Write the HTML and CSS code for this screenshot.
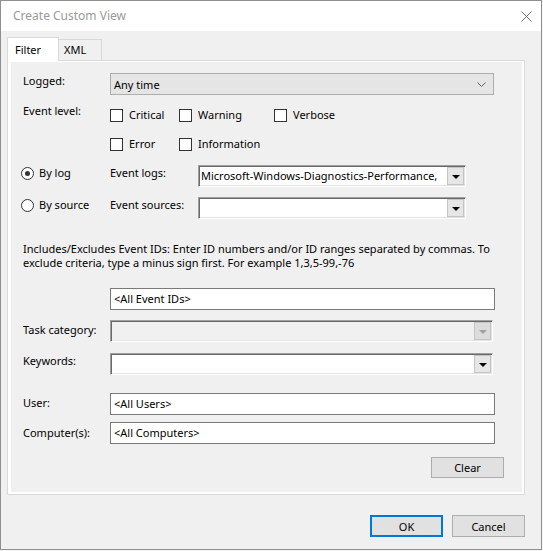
FILE: index.html
```html
<!DOCTYPE html>
<html>
<head>
  <title>Create Custom View</title>
  <link rel="stylesheet" href="styles.css">
</head>
<body>
  <div class="window">
    <div class="titlebar">
      <span class="title">Create Custom View</span>
      <svg class="close" width="11" height="11" viewBox="0 0 11 11"><path d="M0.5 0.5L10.5 10.5M10.5 0.5L0.5 10.5" stroke="#707070" stroke-width="1"/></svg>
    </div>
    <div class="content">
      <div class="tabs">
        <div class="tab active">Filter</div>
        <div class="tab">XML</div>
      </div>
      <div class="tab-frame">
        <div class="page">
          <div class="row">
            <span class="lbl">Logged:</span>
            <div class="select">
              <span>Any time</span>
              <svg width="9" height="5" viewBox="0 0 9 5"><path d="M0.5 0.5L4.5 4.5L8.5 0.5" fill="none" stroke="#606060" stroke-width="1"/></svg>
            </div>
          </div>

          <div class="row level-row">
            <span class="lbl">Event level:</span>
            <div class="checks">
              <span class="check"><span class="box"></span>Critical</span>
              <span class="check"><span class="box"></span>Warning</span>
              <span class="check"><span class="box"></span>Verbose</span>
              <span class="check"><span class="box"></span>Error</span>
              <span class="check"><span class="box"></span>Information</span>
            </div>
          </div>

          <div class="row log-row">
            <span class="radio-item"><span class="radio checked"></span>By log</span>
            <span class="lbl2">Event logs:</span>
            <div class="combo wide">
              <span class="combo-text">Microsoft-Windows-Diagnostics-Performance,</span>
              <span class="drop"><i class="arrow"></i></span>
            </div>
          </div>

          <div class="row source-row">
            <span class="radio-item"><span class="radio"></span>By source</span>
            <span class="lbl2">Event sources:</span>
            <div class="combo wide">
              <span class="combo-text"></span>
              <span class="drop"><i class="arrow"></i></span>
            </div>
          </div>

          <p class="note">Includes/Excludes Event IDs: Enter ID numbers and/or ID ranges separated by commas. To<br>exclude criteria, type a minus sign first. For example 1,3,5-99,-76</p>

          <div class="row ids-row">
            <div class="textbox">&lt;All Event IDs&gt;</div>
          </div>

          <div class="row task-row">
            <span class="lbl pad2">Task category:</span>
            <div class="combo full disabled">
              <span class="combo-text"></span>
              <span class="drop"><i class="arrow"></i></span>
            </div>
          </div>

          <div class="row keywords-row">
            <span class="lbl">Keywords:</span>
            <div class="combo full">
              <span class="combo-text"></span>
              <span class="drop"><i class="arrow"></i></span>
            </div>
          </div>

          <div class="row user-row">
            <span class="lbl pad2">User:</span>
            <div class="textbox">&lt;All Users&gt;</div>
          </div>

          <div class="row computer-row">
            <span class="lbl pad3">Computer(s):</span>
            <div class="textbox">&lt;All Computers&gt;</div>
          </div>

          <div class="row clear-row">
            <button class="btn">Clear</button>
          </div>
        </div>
      </div>
      <div class="footer">
        <button class="btn default">OK</button>
        <button class="btn">Cancel</button>
      </div>
    </div>
  </div>
</body>
</html>
```

FILE: styles.css
```css
* {
  box-sizing: border-box;
}
html, body {
  margin: 0;
  padding: 0;
}
body {
  background-color: #f4f4f4;
  font-family: "Segoe UI", "Noto Sans", sans-serif;
  font-size: 11px;
  color: #000;
}
.window {
  width: 542px;
  height: 550px;
  border: 1px solid #8f8f8f;
  background-color: #f0f0f0;
  display: flex;
  flex-direction: column;
}
.titlebar {
  height: 30px;
  background-color: #fff;
  display: flex;
  align-items: center;
  justify-content: space-between;
  padding: 0 9px 0 12px;
  flex: none;
}
.title {
  color: #9a9a9a;
  font-size: 12px;
  line-height: 16px;
}
.content {
  padding: 6px 0 0 6px;
  flex: 1;
}
.tabs {
  display: flex;
  align-items: flex-end;
  height: 23px;
}
.tab {
  height: 21px;
  width: 44px;
  margin-left: -1px;
  padding-left: 5px;
  line-height: 20px;
  border: 1px solid #d9d9d9;
  border-bottom: none;
  background-color: #f0f0f0;
}
.tab.active {
  position: relative;
  z-index: 1;
  width: 52px;
  height: 24px;
  margin-left: 0;
  margin-bottom: -1px;
  padding-left: 7px;
  line-height: 23px;
  background-color: #fff;
}
.tab-frame {
  width: 518px;
  height: 435px;
  border: 1px solid #d9d9d9;
  background-color: #fff;
  padding: 1px 2px 2px 3px;
}
.page {
  height: 100%;
  background-color: #f0f0f0;
  padding: 11px 18px 0 10px;
}
.row {
  display: flex;
  align-items: flex-start;
}
.lbl {
  width: 89px;
  padding-left: 2px;
  line-height: 16px;
  flex: none;
}
.pad2 {
  padding-top: 2px;
}
.pad3 {
  padding-top: 3px;
}
.lbl2 {
  width: 88px;
  line-height: 16px;
  flex: none;
}
.select {
  width: 384px;
  height: 22px;
  background-color: #e5e5e5;
  border: 1px solid #adadad;
  display: flex;
  align-items: center;
  justify-content: space-between;
  padding: 0 7px 0 3px;
}
.level-row {
  margin-top: 8px;
}
.checks {
  display: grid;
  grid-template-columns: 69px 95px auto;
  row-gap: 13px;
  padding-top: 4px;
}
.check {
  display: flex;
  align-items: center;
  line-height: 16px;
}
.box {
  width: 13px;
  height: 13px;
  border: 1px solid #333;
  background-color: #fff;
  margin-right: 6px;
}
.log-row {
  margin-top: 13px;
}
.source-row {
  margin-top: 10px;
}
.radio-item {
  width: 89px;
  flex: none;
  display: flex;
  align-items: center;
  line-height: 16px;
}
.radio {
  width: 13px;
  height: 13px;
  border: 1px solid #333;
  border-radius: 50%;
  background-color: #fff;
  margin-right: 5px;
  display: flex;
  align-items: center;
  justify-content: center;
}
.radio.checked::after {
  content: "";
  width: 5px;
  height: 5px;
  border-radius: 50%;
  background-color: #333;
}
.combo {
  height: 22px;
  display: flex;
  background-color: #fff;
  border: 1px solid;
  border-color: #a0a0a0 #fff #fff #a0a0a0;
  box-shadow: inset 1px 1px #696969, inset -1px -1px #e3e3e3;
  padding: 1px;
}
.combo.wide {
  width: 268px;
}
.combo.full {
  width: 383px;
}
.combo.disabled {
  background-color: #f0f0f0;
}
.combo-text {
  flex: 1;
  overflow: hidden;
  white-space: nowrap;
  padding-left: 1px;
  line-height: 18px;
}
.drop {
  width: 17px;
  height: 18px;
  flex: none;
  background-color: #e6e6e6;
  border: 1px solid #c4c4c4;
  display: flex;
  align-items: center;
  justify-content: center;
}
.arrow {
  width: 0;
  height: 0;
  border-left: 4px solid transparent;
  border-right: 4px solid transparent;
  border-top: 4px solid #000;
  margin-top: 1px;
}
.disabled .drop {
  background-color: #dcdcdc;
}
.disabled .arrow {
  border-top-color: #a0a0a0;
}
.note {
  margin: 23px 0 0 0;
  padding-left: 2px;
  line-height: 14px;
  white-space: nowrap;
}
.ids-row {
  margin-top: 18px;
  padding-left: 89px;
}
.textbox {
  width: 385px;
  height: 22px;
  border: 1px solid #7a7a7a;
  background-color: #fff;
  padding-left: 3px;
  line-height: 20px;
}
.task-row {
  margin-top: 10px;
}
.keywords-row {
  margin-top: 11px;
}
.user-row {
  margin-top: 18px;
}
.computer-row {
  margin-top: 7px;
}
.clear-row {
  margin-top: 13px;
  justify-content: flex-end;
}
.btn {
  width: 73px;
  height: 21px;
  background-color: #e1e1e1;
  border: 1px solid #adadad;
  font-family: inherit;
  font-size: 11px;
  color: #000;
  padding: 0;
}
.footer {
  display: flex;
  justify-content: flex-end;
  gap: 9px;
  padding: 20px 16px 0 0;
}
.footer .btn {
  height: 22px;
}
.btn.default {
  border: 2px solid #0078d7;
}
```
